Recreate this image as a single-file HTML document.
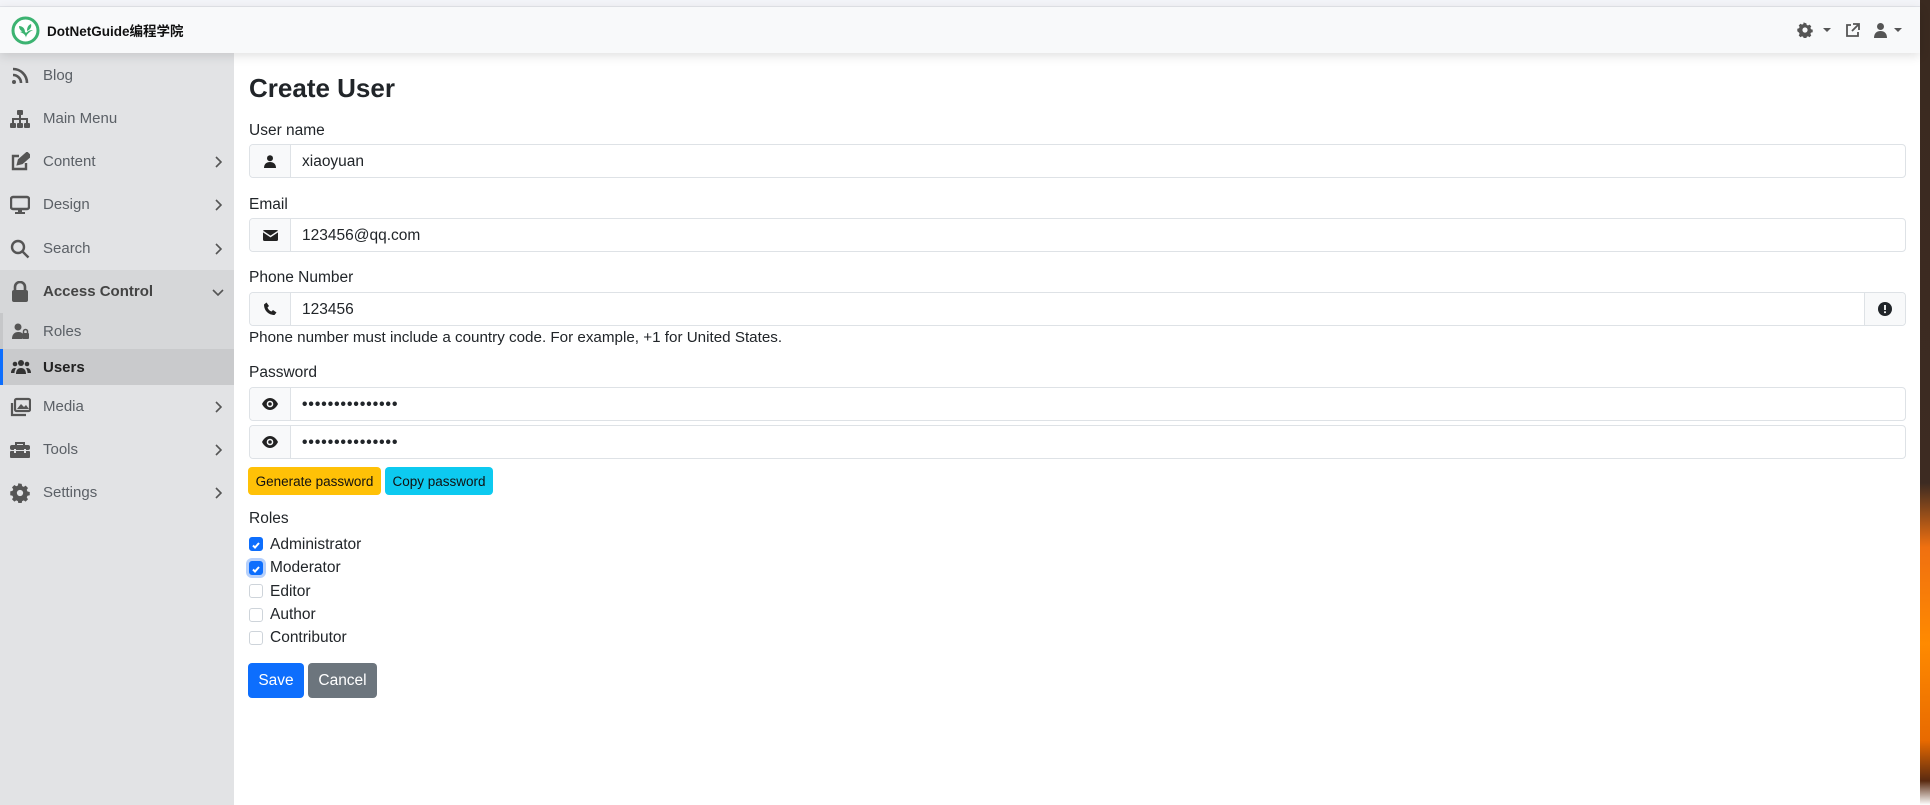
<!DOCTYPE html>
<html><head><meta charset="utf-8"><style>
*{box-sizing:border-box;margin:0;padding:0}
body{width:1930px;height:805px;overflow:hidden;background:#fff;font-family:"Liberation Sans","Noto Sans CJK SC",sans-serif;color:#212529;position:relative}
.abs{position:absolute}
.topstrip{left:0;top:0;width:1920px;height:7px;background:#f3f4f8;border-bottom:1px solid #e3e5ea}
.header{left:0;top:7px;width:1920px;height:46px;background:#f8f9fa;box-shadow:0 3px 10px rgba(0,0,0,.12);z-index:2}
.side{left:0;top:53px;width:234px;height:752px;background:#e2e3e5}
.item{position:absolute;left:0;width:234px;height:43px;display:flex;align-items:center;font-size:15px;color:#5b6066}
.item svg{position:absolute;left:10px}
.item span{position:absolute;left:43px}
.item svg.chev{left:214px}
.lbl{font-size:15.5px;color:#212529}
.ig{position:absolute;left:249px;width:1657px;height:34px;border:1px solid #dee2e6;border-radius:4px;display:flex;background:#fff}
.ig .ad{width:41px;height:100%;background:#f8f9fa;border-right:1px solid #dee2e6;display:flex;align-items:center;justify-content:center;border-radius:4px 0 0 4px}
.ig .v{padding-left:11px;line-height:33px;font-size:15.5px}
.dots{letter-spacing:1px;font-size:13px;font-weight:bold}
.cb{position:absolute;left:249px;width:14px;height:14px;border:1px solid #ced4da;border-radius:3px;background:#fff}
.cb.on{background:#0d6efd;border-color:#0d6efd}
.cbl{position:absolute;left:270px;font-size:15.5px}
.btn{position:absolute;border-radius:4px;display:flex;align-items:center;justify-content:center}
</style></head><body>
<div class="abs topstrip"></div>
<div class="abs" style="left:1920px;top:0;width:10px;height:805px;background:linear-gradient(#3a2a20 0%,#3d2b22 60%,#f07010 68%,#ff8a00 80%,#e86a00 92%,#5a2a10 97%,#fff 100%)"></div>
<div class="abs header">
  <svg class="abs" style="left:11px;top:9px" width="29" height="29" viewBox="0 0 29 29"><circle cx="14.5" cy="14.5" r="12.5" fill="#fff" stroke="#3cb371" stroke-width="3"/><path d="M9 16c3 1 6 3 6 6 0-3 3-6 7-8-3 0-5 1-7 3-1-2-3-2-6-1z" fill="#3cb371"/><path d="M8 10c3 0 6 2 6 6-3 0-6-2-6-6z M20 8c1 3-1 6-4 7 0-3 1-6 4-7z" fill="#3cb371"/></svg>
  <div class="abs" style="left:47px;top:13px;font-size:13.5px;font-weight:bold;color:#111">DotNetGuide编程学院</div>
  <svg class="abs" style="left:1797px;top:15px" width="16" height="16" viewBox="0 0 16 16"><path d="M8 1l1.3.2.4 1.7 1.3.6 1.5-.9 1.8 1.8-.9 1.5.6 1.3 1.7.4v2.6l-1.7.4-.6 1.3.9 1.5-1.8 1.8-1.5-.9-1.3.6-.4 1.7H6.7l-.4-1.7-1.3-.6-1.5.9-1.8-1.8.9-1.5-.6-1.3L.3 9.3V6.7l1.7-.4.6-1.3-.9-1.5 1.8-1.8 1.5.9 1.3-.6.4-1.7z" fill="#555"/><circle cx="8" cy="8" r="2.6" fill="#f8f9fa"/></svg>
  <div class="abs" style="left:1823px;top:21px;border:4px solid transparent;border-top:4px solid #555;border-bottom:0"></div>
  <svg class="abs" style="left:1845px;top:16px" width="15" height="15" viewBox="0 0 15 15" fill="none" stroke="#555" stroke-width="1.8"><path d="M6 2H2v11h11V9"/><path d="M8 1h6v6M14 1L7 8"/></svg>
  <svg class="abs" style="left:1873px;top:15px" width="15" height="16" viewBox="0 0 15 16" fill="#555"><circle cx="7.5" cy="4.5" r="3.5"/><path d="M1 16c0-5 3-7 6.5-7S14 11 14 16z"/></svg>
  <div class="abs" style="left:1894px;top:21px;border:4px solid transparent;border-top:4px solid #555;border-bottom:0"></div>
</div>
<div class="abs side">
  <div class="item" style="top:1px"><svg width="20" height="20" viewBox="0 0 20 20" fill="none" stroke="#555" stroke-width="2.6"><path d="M3 3a14 14 0 0 1 14 14M3 9a8 8 0 0 1 8 8"/><circle cx="4" cy="16" r="2" fill="#555" stroke="none"/></svg><span>Blog</span></div>
  <div class="item" style="top:44px"><svg width="20" height="20" viewBox="0 0 20 20" fill="#555"><rect x="7" y="1" width="6" height="5" rx="1"/><rect x="0" y="14" width="6" height="5" rx="1"/><rect x="7" y="14" width="6" height="5" rx="1"/><rect x="14" y="14" width="6" height="5" rx="1"/><path d="M9 6h2v3h7v5h-2v-3h-5v3H9v-3H4v3H2V9h7z"/></svg><span>Main Menu</span></div>
  <div class="item" style="top:87px"><svg width="20" height="20" viewBox="0 0 20 20" fill="none" stroke="#555" stroke-width="2.4"><path d="M9 4H3v13h13v-6"/><path d="M8 12l1-4 8-7 3 3-8 7z" fill="#555"/></svg><span>Content</span><svg class="chev" width="8" height="12" viewBox="0 0 8 12" fill="none" stroke="#555" stroke-width="1.6"><path d="M2 1l5 5-5 5"/></svg></div>
  <div class="item" style="top:130px"><svg width="20" height="20" viewBox="0 0 20 20" fill="#555"><rect x="1" y="2" width="18" height="12" rx="2" fill="none" stroke="#555" stroke-width="2.4"/><rect x="8" y="14" width="4" height="3"/><rect x="5" y="17" width="10" height="2"/></svg><span>Design</span><svg class="chev" width="8" height="12" viewBox="0 0 8 12" fill="none" stroke="#555" stroke-width="1.6"><path d="M2 1l5 5-5 5"/></svg></div>
  <div class="item" style="top:174px"><svg width="20" height="20" viewBox="0 0 20 20" fill="none" stroke="#555" stroke-width="2.4"><circle cx="8" cy="8" r="6"/><path d="M12.5 12.5l6 6"/></svg><span>Search</span><svg class="chev" width="8" height="12" viewBox="0 0 8 12" fill="none" stroke="#555" stroke-width="1.6"><path d="M2 1l5 5-5 5"/></svg></div>
  <div class="item" style="top:217px;background:#d6d7d9;color:#444;font-weight:bold"><svg width="20" height="22" viewBox="0 0 20 22" fill="#555"><path d="M5 10V6a5 5 0 0 1 10 0v4" fill="none" stroke="#555" stroke-width="2.6"/><rect x="2" y="9" width="16" height="12" rx="2"/></svg><span>Access Control</span><svg class="chev" style="left:212px" width="12" height="8" viewBox="0 0 12 8" fill="none" stroke="#555" stroke-width="1.6"><path d="M1 2l5 5 5-5"/></svg></div>
  <div class="item" style="top:260px;height:36px;background:#d6d7d9;border-left:3px solid #c6c7c9"><svg width="18" height="16" viewBox="0 0 18 16" fill="#555" style="left:9px"><circle cx="6" cy="4" r="3.5"/><path d="M0 16c0-5 3-7 6-7s3 .5 4 1v6z"/><rect x="10" y="10" width="7" height="6" rx="1"/><path d="M11.5 10V8.5a2 2 0 0 1 4 0V10" fill="none" stroke="#555" stroke-width="1.5"/></svg><span style="left:40px">Roles</span></div>
  <div class="item" style="top:296px;height:36px;background:#c9cacc;border-left:3px solid #0d6efd;color:#222;font-weight:bold"><svg width="20" height="16" viewBox="0 0 20 16" fill="#333" style="left:8px"><circle cx="10" cy="4" r="3"/><circle cx="4" cy="5" r="2.3"/><circle cx="16" cy="5" r="2.3"/><path d="M5 15c0-4 2-6 5-6s5 2 5 6zM0 14c0-3 1.5-5 4-5l1 .3C4 11 3.5 12 3.5 14zM20 14c0-3-1.5-5-4-5l-1 .3c1 1.7 1.5 2.7 1.5 4.7z"/></svg><span style="left:40px">Users</span></div>
  <div class="item" style="top:332px"><svg width="21" height="20" viewBox="0 0 21 20" fill="none" stroke="#555" stroke-width="2.2"><rect x="5" y="2" width="15" height="12" rx="1.5"/><path d="M2 6v12h14"/><path d="M7 12l4-5 3 3 2-2 3 4z" fill="#555" stroke="none"/></svg><span>Media</span><svg class="chev" width="8" height="12" viewBox="0 0 8 12" fill="none" stroke="#555" stroke-width="1.6"><path d="M2 1l5 5-5 5"/></svg></div>
  <div class="item" style="top:375px"><svg width="20" height="18" viewBox="0 0 20 18" fill="#555"><path d="M6 4V2h8v2" fill="none" stroke="#555" stroke-width="2"/><rect x="0" y="4" width="20" height="5" rx="2"/><rect x="0" y="10" width="20" height="7" rx="1"/><rect x="4" y="8" width="2" height="4" fill="#e2e3e5"/><rect x="14" y="8" width="2" height="4" fill="#e2e3e5"/></svg><span>Tools</span><svg class="chev" width="8" height="12" viewBox="0 0 8 12" fill="none" stroke="#555" stroke-width="1.6"><path d="M2 1l5 5-5 5"/></svg></div>
  <div class="item" style="top:418px"><svg width="20" height="20" viewBox="0 0 16 16"><path d="M8 .5l1.3.2.4 1.8 1.3.6 1.5-1 1.9 1.9-1 1.5.6 1.3 1.8.4v2.6l-1.8.4-.6 1.3 1 1.5-1.9 1.9-1.5-1-1.3.6-.4 1.8H6.7l-.4-1.8-1.3-.6-1.5 1-1.9-1.9 1-1.5-.6-1.3-1.8-.4V6.7l1.8-.4.6-1.3-1-1.5 1.9-1.9 1.5 1 1.3-.6.4-1.8z" fill="#555"/><circle cx="8" cy="8" r="2.5" fill="#e2e3e5"/></svg><span>Settings</span><svg class="chev" width="8" height="12" viewBox="0 0 8 12" fill="none" stroke="#555" stroke-width="1.6"><path d="M2 1l5 5-5 5"/></svg></div>
</div>

<div class="abs" style="left:249px;top:73px;font-size:26px;font-weight:bold;color:#212529">Create User</div>
<div class="abs lbl" style="left:249px;top:122px">User name</div>
<div class="ig" style="top:144px"><div class="ad"><svg width="12" height="13" viewBox="0 0 12 13" fill="#222"><circle cx="6" cy="3.2" r="3"/><path d="M0 13c0-4 2.5-6 6-6s6 2 6 6z"/></svg></div><div class="v">xiaoyuan</div></div>
<div class="abs lbl" style="left:249px;top:196px">Email</div>
<div class="ig" style="top:218px"><div class="ad"><svg width="15" height="11" viewBox="0 0 15 11" fill="#222"><rect width="15" height="11" rx="1.5"/><path d="M0 1.5l7.5 5 7.5-5" fill="none" stroke="#f8f9fa" stroke-width="1.4"/></svg></div><div class="v">123456@qq.com</div></div>
<div class="abs lbl" style="left:249px;top:269px">Phone Number</div>
<div class="ig" style="top:292px"><div class="ad"><svg width="14" height="14" viewBox="0 0 14 14" fill="#222"><path d="M1 2.5L3.5.5 6 4 4.5 5.5c.8 2 2 3.2 4 4L10 8l3.5 2.5-2 2.5C5.5 13 1 8.5 1 2.5z"/></svg></div><div class="v" style="flex:1">123456</div><div class="ad" style="border-right:0;border-left:1px solid #dee2e6;border-radius:0 4px 4px 0;width:41px"><svg width="14" height="14" viewBox="0 0 14 14"><circle cx="7" cy="7" r="7" fill="#212529"/><rect x="6.1" y="3" width="1.8" height="5" fill="#fff"/><rect x="6.1" y="9.3" width="1.8" height="1.8" fill="#fff"/></svg></div></div>
<div class="abs" style="left:249px;top:329px;font-size:15.2px">Phone number must include a country code. For example, +1 for United States.</div>
<div class="abs lbl" style="left:249px;top:364px">Password</div>
<div class="ig" style="top:387px"><div class="ad"><svg width="16" height="12" viewBox="0 0 16 12"><path d="M0 6C2 2 5 0 8 0s6 2 8 6c-2 4-5 6-8 6S2 10 0 6z" fill="#222"/><circle cx="8" cy="6" r="3.3" fill="#f8f9fa"/><circle cx="8" cy="6" r="1.8" fill="#222"/></svg></div><div class="v dots">•••••••••••••••</div></div>
<div class="ig" style="top:425px"><div class="ad"><svg width="16" height="12" viewBox="0 0 16 12"><path d="M0 6C2 2 5 0 8 0s6 2 8 6c-2 4-5 6-8 6S2 10 0 6z" fill="#222"/><circle cx="8" cy="6" r="3.3" fill="#f8f9fa"/><circle cx="8" cy="6" r="1.8" fill="#222"/></svg></div><div class="v dots">•••••••••••••••</div></div>
<div class="btn" style="left:248px;top:467px;width:133px;height:28px;background:#ffc107;font-size:13.5px;color:#111">Generate password</div>
<div class="btn" style="left:385px;top:467px;width:108px;height:28px;background:#0dcaf0;font-size:13.5px;color:#111">Copy password</div>
<div class="abs lbl" style="left:249px;top:510px">Roles</div>
<div class="cb on" style="top:537px"><svg width="12" height="12" viewBox="0 0 12 12" fill="none" stroke="#fff" stroke-width="2"><path d="M3 6.5l2 2 4-4.5"/></svg></div><div class="cbl" style="top:536px">Administrator</div>
<div class="cb on" style="top:561px;box-shadow:0 0 0 3px #b6d0fb"><svg width="12" height="12" viewBox="0 0 12 12" fill="none" stroke="#fff" stroke-width="2"><path d="M3 6.5l2 2 4-4.5"/></svg></div><div class="cbl" style="top:559px">Moderator</div>
<div class="cb" style="top:584px"></div><div class="cbl" style="top:583px">Editor</div>
<div class="cb" style="top:608px"></div><div class="cbl" style="top:606px">Author</div>
<div class="cb" style="top:631px"></div><div class="cbl" style="top:629px">Contributor</div>
<div class="btn" style="left:248px;top:663px;width:56px;height:35px;background:#0d6efd;color:#fff;font-size:15.5px">Save</div>
<div class="btn" style="left:308px;top:663px;width:69px;height:35px;background:#6c757d;color:#fff;font-size:15.5px">Cancel</div>
</body></html>
